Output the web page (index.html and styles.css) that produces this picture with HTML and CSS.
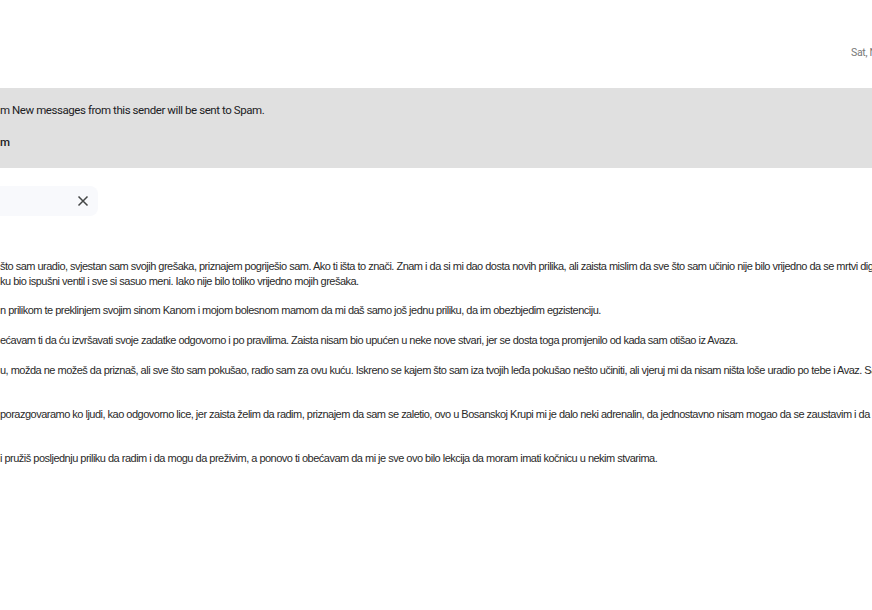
FILE: index.html
```html
<!DOCTYPE html>
<html>
<head>
<meta charset="utf-8">
<link rel="stylesheet" href="styles.css">
</head>
<body>
<div class="page">
  <div class="header">
    <div class="date">Sat, Nov 16, 2:14 PM</div>
  </div>
  <div class="banner">
    <div class="banner-text">m New messages from this sender will be sent to Spam.</div>
    <div class="banner-action">m</div>
  </div>
  <div class="chip">
    <svg class="close" width="12" height="12" viewBox="0 0 12 12"><path d="M1.5 1.5L10.5 10.5M10.5 1.5L1.5 10.5" stroke="#444746" stroke-width="1.5" fill="none"/></svg>
  </div>
  <div class="body">
    <div class="line">što sam uradio, svjestan sam svojih grešaka, priznajem pogriješio sam. Ako ti išta to znači. Znam i da si mi dao dosta novih prilika, ali zaista mislim da sve što sam učinio nije bilo vrijedno da se mrtvi digne</div>
    <div class="line">ku bio ispušni ventil i sve si sasuo meni. Iako nije bilo toliko vrijedno mojih grešaka.</div>
    <div class="blank"></div>
    <div class="line">n prilikom te preklinjem svojim sinom Kanom i mojom bolesnom mamom da mi daš samo još jednu priliku, da im obezbjedim egzistenciju.</div>
    <div class="blank"></div>
    <div class="line">ećavam ti da ću izvršavati svoje zadatke odgovorno i po pravilima. Zaista nisam bio upućen u neke nove stvari, jer se dosta toga promjenilo od kada sam otišao iz Avaza.</div>
    <div class="blank"></div>
    <div class="line">u, možda ne možeš da priznaš, ali sve što sam pokušao, radio sam za ovu kuću. Iskreno se kajem što sam iza tvojih leđa pokušao nešto učiniti, ali vjeruj mi da nisam ništa loše uradio po tebe i Avaz. Sada</div>
    <div class="blank"></div>
    <div class="blank"></div>
    <div class="line">porazgovaramo ko ljudi, kao odgovorno lice, jer zaista želim da radim, priznajem da sam se zaletio, ovo u Bosanskoj Krupi mi je dalo neki adrenalin, da jednostavno nisam mogao da se zaustavim i da</div>
    <div class="blank"></div>
    <div class="blank"></div>
    <div class="line">i pružiš posljednju priliku da radim i da mogu da preživim, a ponovo ti obećavam da mi je sve ovo bilo lekcija da moram imati kočnicu u nekim stvarima.</div>
  </div>
</div>
</body>
</html>
```
FILE: styles.css
```css
html, body {
  margin: 0;
  padding: 0;
  background: #ffffff;
}
body {
  width: 872px;
  height: 610px;
  overflow: hidden;
}
.page {
  width: 872px;
  overflow: hidden;
}
.header {
  height: 88px;
  display: flex;
  padding-left: 851px;
  box-sizing: border-box;
}
.date {
  margin-top: 47px;
  font-family: Roboto, "Liberation Sans", sans-serif;
  font-size: 10.5px;
  letter-spacing: -0.3px;
  color: #777777;
  white-space: nowrap;
  line-height: 12px;
}
.banner {
  height: 80px;
  background: #e0e0e0;
  box-sizing: border-box;
  padding-top: 14px;
  font-family: Roboto, "Liberation Sans", sans-serif;
  color: #202124;
}
.banner-text {
  font-size: 11.5px;
  letter-spacing: -0.43px;
  line-height: 16px;
  white-space: nowrap;
}
.banner-action {
  margin-top: 16px;
  font-size: 11.5px;
  line-height: 16px;
  font-weight: 500;
}
.chip {
  margin-top: 18px;
  width: 98px;
  height: 30px;
  background: #f8f9fc;
  border-radius: 0 8px 8px 0;
  display: flex;
  align-items: center;
  justify-content: flex-end;
  padding-right: 9px;
  box-sizing: border-box;
}
.close {
  display: block;
}
.body {
  margin-top: 43px;
  font-family: "Liberation Sans", Arial, sans-serif;
  font-size: 11px;
  letter-spacing: -0.51px;
  color: #2a2a2a;
}
.line {
  white-space: nowrap;
  line-height: 14.8px;
  height: 14.8px;
}
.blank {
  height: 14.8px;
}
```
